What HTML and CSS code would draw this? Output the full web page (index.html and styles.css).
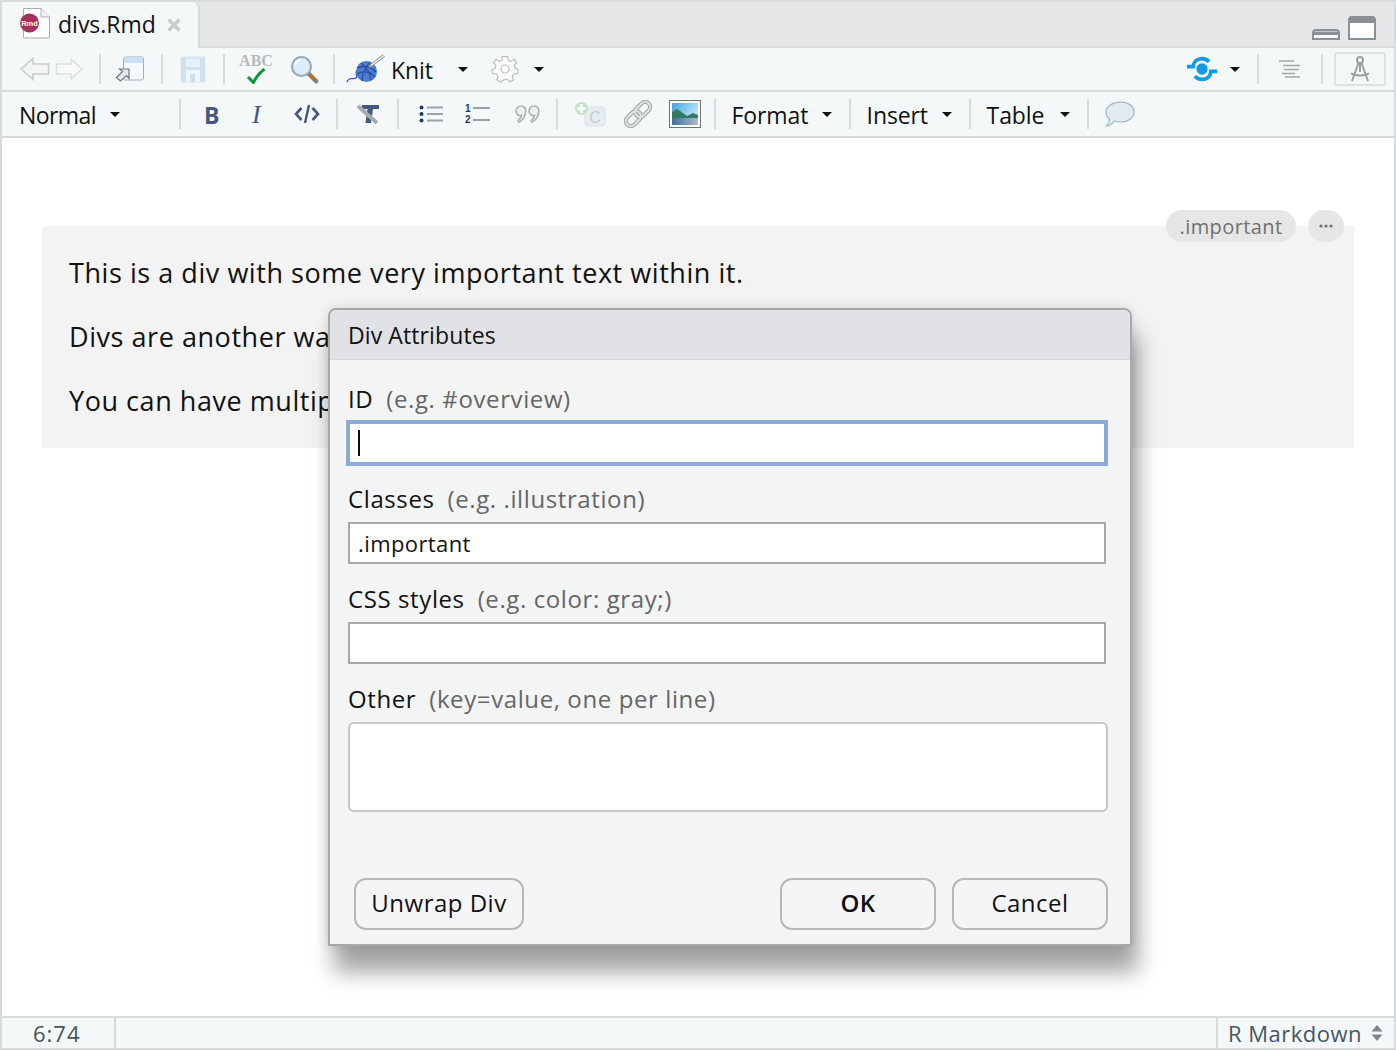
FILE: index.html
```html
<!DOCTYPE html>
<html lang="en">
<head>
    <meta charset="UTF-8">
    <meta name="viewport" content="width=device-width, initial-scale=1.0">
    <title>divs.Rmd</title>
    <link rel="stylesheet" href="styles.css">
</head>
<body>
    <div class="window">
        <div class="tabbar">
            <div class="tab">
                <svg class="tab-icon" width="32" height="34" viewBox="0 0 32 34">
                    <path d="M5.500 2.500H23L31.500 11V31.500a.5.5 0 0 1-.5.5H6a.5.5 0 0 1-.5-.5z" fill="#fff" stroke="#a9adb0"/>
                    <path d="M23 2.500V11H31.500" fill="#f1f2f3" stroke="#a9adb0"/>
                    <circle cx="11.500" cy="17" r="9.500" fill="#a5305a"/>
                    <text x="11.500" y="19.500" class="rmd-text">Rmd</text>
                </svg>
                <span class="tab-name">divs.Rmd</span>
                <svg class="tab-close" width="14" height="14" viewBox="0 0 14 14"><path d="M1.500 1.500L12.500 12.500M12.500 1.500L1.500 12.500" stroke="#c9cccd" stroke-width="3.600"/></svg>
            </div>
            <div class="pane-btns">
                <svg width="28" height="12" viewBox="0 0 28 12"><path d="M1 11V5a3 3 0 0 1 3-3H24a3 3 0 0 1 3 3V11z" fill="#fff" stroke="#8a9196" stroke-width="2"/><path d="M1 3.500H27V7H1z" fill="#8a9196"/></svg>
                <svg width="28" height="24" viewBox="0 0 28 24"><path d="M1 23V4a3 3 0 0 1 3-3H24a3 3 0 0 1 3 3V23z" fill="#fff" stroke="#8a9196" stroke-width="2"/><path d="M1 2H27V7H1z" fill="#8a9196"/></svg>
            </div>
        </div>

        <div class="toolbar">
            <svg class="i-back" width="30" height="24" viewBox="0 0 30 24"><path d="M1 12L13 1.500V7H28.500V17H13V22.500z" fill="#f3f5f6" stroke="#c6cacc" stroke-width="1.500"/></svg>
            <svg class="i-forward" width="28" height="24" viewBox="0 0 28 24"><path d="M27 12L16 2V7H1.500V17H16V22z" fill="#f7f9fa" stroke="#dcdfe0" stroke-width="1.500"/></svg>
            <span class="sep sep-a"></span>
            <svg class="i-popout" width="30" height="26" viewBox="0 0 30 26"><rect x="8.500" y="1" width="20" height="23" rx="2" fill="#f7fafc" stroke="#9fb1c0"/><path d="M9 2.500a1.500 1.500 0 0 1 1.500-1.500H26.500a1.500 1.500 0 0 1 1.500 1.500V7H9z" fill="#c9e0f5"/><path d="M1.500 21.500L7.500 15.500L4.500 13H14V22.500L11.500 19.500L5.500 25z" fill="#e3e8ec" stroke="#6d7a84" stroke-width="1.200"/></svg>
            <span class="sep sep-b"></span>
            <svg class="i-save" width="26" height="27" viewBox="0 0 26 27"><path d="M2 1H24a1 1 0 0 1 1 1V25a1 1 0 0 1-1 1H2a1 1 0 0 1-1-1V2a1 1 0 0 1 1-1z" fill="#cfe1f0" stroke="#d9e5ef"/><rect x="6" y="3" width="14" height="8" fill="#e6f0f8"/><rect x="6" y="14" width="14" height="12" fill="#f1f6fa"/><rect x="10" y="18" width="5" height="8" fill="#cfe1f0"/></svg>
            <span class="sep sep-c"></span>
            <span class="i-spell">
                <span class="abc">ABC</span>
                <svg class="check" width="20" height="16" viewBox="0 0 20 16"><path d="M2 9L7.500 14.500C10 9 13 5 18.500 1" fill="none" stroke="#12933a" stroke-width="3"/></svg>
            </span>
            <svg class="i-find" width="29" height="29" viewBox="0 0 29 29"><path d="M18 18L26 26" stroke="#a8743c" stroke-width="4.500" stroke-linecap="round"/><path d="M26 26L27.500 27.500" stroke="#4a9ccf" stroke-width="3.500"/><circle cx="11.500" cy="11.500" r="9.500" fill="#dcecf8" stroke="#93a7b4" stroke-width="2"/><path d="M5 10a7 7 0 0 1 6-5" fill="none" stroke="#fff" stroke-width="2"/></svg>
            <span class="sep sep-d"></span>
            <svg class="i-knit" width="40" height="30" viewBox="0 0 40 30"><path d="M1 28C3 22 7 26 10 24S7 18 12 16" fill="none" stroke="#2f5bb0" stroke-width="1.300"/><circle cx="20.500" cy="17.500" r="10.500" fill="#4a7ccf"/><path d="M11 14C18 11 25 13 30 18M11 20C18 16 25 18 29 23M15 9C20 13 25 20 25 26M24 8C20 13 16 20 16 27" fill="none" stroke="#234c9e" stroke-width="1.200"/><path d="M23 13L38 1.500" stroke="#8d8f92" stroke-width="3"/><path d="M25 11.500L38 1.500" stroke="#fff" stroke-width="1.200"/></svg>
            <span class="tb-label knit-label">Knit</span>
            <span class="caret knit-caret"></span>
            <svg class="i-gear" width="28" height="28" viewBox="0 0 28 28"><path d="M11.500 1.500H16.500L17.300 5.200L20 6.400L23.300 4.300L25.700 7.600L23.200 10.300L24 13L27 14.500L26.500 18.500L22.800 19L21.300 21.500L22.500 25L19 26.800L16.500 24.200H13.500L9.500 26.800L6 24.800L7 21.500L5.500 19L1.500 18.500L1 14.500L4.300 13L5 10.300L2.500 7.600L5 4.300L8.300 6.400L11 5.200z" fill="#fafbfb" stroke="#b6babd" stroke-width="1.100"/><circle cx="14" cy="14" r="4" fill="#fff" stroke="#b6babd" stroke-width="1.100"/></svg>
            <span class="caret gear-caret"></span>
            <div class="toolbar-right">
                <svg class="i-publish" width="32" height="26" viewBox="0 0 34 26"><path d="M1 10.500H7.500C8 5 12 2 17 2C20.500 2 23 3.500 24.500 5.500M33 15.500H26.500C26 21 22 24 17 24C13.500 24 11 22.500 9.500 20.500" fill="none" stroke="#119ae8" stroke-width="4"/><circle cx="17" cy="13" r="6" fill="#119ae8"/></svg>
                <span class="caret publish-caret"></span>
                <span class="sep sep-e"></span>
                <svg class="i-outline" width="22" height="18" viewBox="0 0 22 18"><path d="M1 1H16M5 5.500H22M6 9.500H21M4 13.500H17M7 17H22" stroke="#a3a7aa" stroke-width="1.700"/></svg>
                <span class="sep sep-f"></span>
                <span class="visual-btn">
                    <svg width="24" height="28" viewBox="0 0 24 28"><circle cx="12" cy="5" r="3" fill="none" stroke="#9ba0a3" stroke-width="2"/><path d="M10.500 8L4 26M13.500 8L20 26M12 8V17M3 18.500C8 21 16 21 21 18.500" fill="none" stroke="#9ba0a3" stroke-width="2"/></svg>
                </span>
            </div>
        </div>

        <div class="toolbar formatbar">
            <span class="tb-label normal-label">Normal</span>
            <span class="caret normal-caret"></span>
            <span class="sep sep-g"></span>
            <b class="i-bold">B</b>
            <i class="i-italic">I</i>
            <svg class="i-code" width="26" height="20" viewBox="0 0 26 20"><path d="M7.500 4L2 10L7.500 16M18.500 4L24 10L18.500 16" fill="none" stroke="#45567f" stroke-width="2.600"/><path d="M15 1L11 19" stroke="#45567f" stroke-width="2.400"/></svg>
            <span class="sep sep-h"></span>
            <svg class="i-clear" width="22" height="20" viewBox="0 0 22 20"><path d="M5 1H22V5H16L14 19H8.500L10.500 5H5z" fill="#45567f"/><path d="M1 2L20 19" stroke="#a6abae" stroke-width="3.800"/></svg>
            <span class="sep sep-i"></span>
            <svg class="i-bullets" width="24" height="18" viewBox="0 0 24 18"><circle cx="2.500" cy="2.500" r="2" fill="#1f3769"/><circle cx="2.500" cy="9" r="2" fill="#1f3769"/><circle cx="2.500" cy="15.500" r="2" fill="#1f3769"/><path d="M8 2.500H24M8 9H24M8 15.500H24" stroke="#9aa2a8" stroke-width="1.800"/></svg>
            <span class="i-numbered">
                <span class="digits"><span>1</span><span>2</span></span>
                <svg width="17" height="14" viewBox="0 0 17 14"><path d="M0 1H17M0 13H17" stroke="#9aa2a8" stroke-width="1.800"/></svg>
            </span>
            <svg class="i-quote" width="25" height="18" viewBox="0 0 25 18"><path d="M6 1a4.500 4.500 0 0 1 4.800 5C10.500 11 8 15 4 17L3 15.500C5 14 6 12.500 6.500 10.500C3.500 11 1 9 1 6A5 5 0 0 1 6 1zM19 1a4.500 4.500 0 0 1 4.800 5C23.500 11 21 15 17 17L16 15.500C18 14 19 12.500 19.500 10.500C16.500 11 14 9 14 6A5 5 0 0 1 19 1z" fill="#eef0f1" stroke="#a9aeb1" stroke-width="1.500"/></svg>
            <span class="sep sep-j"></span>
            <svg class="i-cite" width="32" height="26" viewBox="0 0 32 26"><rect x="11" y="6" width="20" height="19" rx="3" fill="#e6ecf2" stroke="#d8e0e6"/><text x="21" y="21.500" class="cite-text">C</text><circle cx="7.500" cy="7.500" r="6.500" fill="#bfe6bd"/><path d="M7.500 3V12M3 7.500H12" stroke="#fff" stroke-width="3"/></svg>
            <svg class="i-link" width="28" height="28" viewBox="0 0 28 28"><g fill="none" transform="rotate(-45 14 14)"><rect x="-1" y="9" width="17" height="10" rx="5" stroke="#a8adb0" stroke-width="4.200"/><rect x="12" y="9" width="17" height="10" rx="5" stroke="#a8adb0" stroke-width="4.200"/><rect x="-1" y="9" width="17" height="10" rx="5" stroke="#e6e8e9" stroke-width="1.800"/><rect x="12" y="9" width="17" height="10" rx="5" stroke="#e6e8e9" stroke-width="1.800"/></g></svg>
            <svg class="i-image" width="32" height="28" viewBox="0 0 32 28"><defs><linearGradient id="sky" x1="0" y1="0" x2="1" y2="0.600"><stop offset="0" stop-color="#3fa3e0"/><stop offset="1" stop-color="#cfeafa"/></linearGradient><linearGradient id="lake" x1="0" y1="0" x2="1" y2="0"><stop offset="0" stop-color="#3f6f9c"/><stop offset="1" stop-color="#a9bccb"/></linearGradient></defs><rect x="0.500" y="0.500" width="31" height="27" fill="#fff" stroke="#6f7275"/><rect x="3" y="3" width="26" height="22" fill="url(#sky)"/><rect x="3" y="18" width="26" height="7" fill="url(#lake)"/><path d="M3 12L8 9L14 13L18 16L24 13L29 15V18H3z" fill="#2f7d5e"/></svg>
            <span class="sep sep-k"></span>
            <span class="tb-label format-label">Format</span>
            <span class="caret menu-caret"></span>
            <span class="sep sep-l"></span>
            <span class="tb-label insert-label">Insert</span>
            <span class="caret menu-caret"></span>
            <span class="sep sep-l"></span>
            <span class="tb-label table-label">Table</span>
            <span class="caret menu-caret"></span>
            <span class="sep sep-l"></span>
            <svg class="i-comment" width="30" height="26" viewBox="0 0 30 26"><path d="M16 1C23 1 29 5 29 11S23 21 16 21C13 21 11 20.500 9.500 20C8 22 5 24.500 1.500 25C3.500 23 4.500 20.500 4.500 18C2 16 1 14 1 11C1 5 8 1 16 1z" fill="#dfeaf2" stroke="#a2b3c2" stroke-width="1.200"/></svg>
        </div>

        <div class="editor">
            <div class="div-block">
                <p>This is a div with some very important text within it.</p>
                <p>Divs are another way</p>
                <p>You can have multip</p>
                <div class="div-chips">
                    <span class="chip">.important</span>
                    <span class="chip-more"><svg width="14" height="4" viewBox="0 0 14 4"><circle cx="2" cy="2" r="1.600"/><circle cx="7" cy="2" r="1.600"/><circle cx="12" cy="2" r="1.600"/></svg></span>
                </div>
            </div>
        </div>

        <div class="statusbar">
            <span class="pos">6:74</span>
            <span class="status-mid"></span>
            <span class="mode">R Markdown
                <svg width="12" height="18" viewBox="0 0 12 18"><path d="M6 1L11.500 7.500H.5zM6 17L.5 10.500H11.500z" fill="#7d868c"/></svg>
            </span>
        </div>

        <form class="dialog">
            <div class="dialog-title">Div Attributes</div>
            <div class="dialog-body">
                <label class="field-label">ID<span class="hint">(e.g. #overview)</span></label>
                <div class="input focused"><span class="cursor"></span></div>
                <label class="field-label">Classes<span class="hint">(e.g. .illustration)</span></label>
                <div class="input">.important</div>
                <label class="field-label">CSS styles<span class="hint">(e.g. color: gray;)</span></label>
                <div class="input"></div>
                <label class="field-label">Other<span class="hint">(key=value, one per line)</span></label>
                <div class="textarea"></div>
                <div class="dialog-buttons">
                    <button type="button" class="btn btn-unwrap">Unwrap Div</button>
                    <button type="button" class="btn btn-ok">OK</button>
                    <button type="button" class="btn btn-cancel">Cancel</button>
                </div>
            </div>
        </form>
    </div>
</body>
</html>
```

FILE: styles.css
```css
html, body {
    margin: 0;
    height: 100%;
    background-color: #fff;
}
body {
    font-family: "Open Sans", "Noto Sans", sans-serif;
    color: #111;
    overflow: hidden;
}
svg {
    display: block;
    flex: none;
}
.window {
    position: relative;
    box-sizing: border-box;
    width: 1396px;
    height: 1050px;
    border: 2px solid #d6dadc;
    display: flex;
    flex-direction: column;
}

/* tab strip */
.tabbar {
    height: 44px;
    background-color: #e6e7e9;
    display: flex;
    justify-content: space-between;
    flex: none;
    border-bottom: 2px solid #d6dadc;
}
.tab {
    width: 198px;
    height: 46px;
    box-sizing: border-box;
    background-color: #f4f8f9;
    border-right: 2px solid #d6dadc;
    border-top-right-radius: 6px;
    display: flex;
    align-items: center;
    padding-left: 16px;
    padding-bottom: 4px;
}
.rmd-text {
    font-family: "Liberation Sans", sans-serif;
    font-size: 7.500px;
    font-weight: bold;
    fill: #fff;
    text-anchor: middle;
}
.tab-name {
    font-size: 23px;
    width: 97px;
    margin-left: 8px;
    padding-top: 2px;
}
.tab-close {
    margin-left: 12px;
    margin-top: 4px;
}
.pane-btns {
    display: flex;
    align-items: flex-end;
    gap: 8px;
    padding: 0 18px 6px 0;
}

/* toolbars */
.toolbar {
    height: 42px;
    flex: none;
    background-color: #f4f8f9;
    border-bottom: 2px solid #d6dadc;
    display: flex;
    align-items: center;
}
.formatbar {
    height: 44px;
}
.toolbar-right {
    margin-left: auto;
    display: flex;
    align-items: center;
}
.tb-label {
    font-size: 23px;
    letter-spacing: -0.100px;
    flex: none;
    padding-top: 2px;
}
.sep {
    width: 2px;
    height: 30px;
    background-color: #d9dcde;
    flex: none;
}
.caret {
    width: 0;
    height: 0;
    flex: none;
    border-left: 5px solid transparent;
    border-right: 5px solid transparent;
    border-top: 5px solid #111;
}

.i-back { margin-left: 18px; }
.i-forward { margin-left: 5px; }
.sep-a { margin-left: 16px; }
.i-popout { margin-left: 14px; }
.sep-b { margin-left: 16px; }
.i-save { margin-left: 17px; }
.sep-c { margin-left: 17px; }
.i-spell {
    margin-left: 13px;
    width: 36px;
    display: flex;
    flex-direction: column;
    align-items: center;
    height: 32px;
}
.abc {
    font-family: "Liberation Serif", serif;
    font-weight: bold;
    font-size: 16px;
    line-height: 15px;
    color: #b5b9bc;
}
.i-find { margin-left: 16px; }
.sep-d { margin-left: 14px; }
.i-knit { margin-left: 11px; }
.knit-label { margin-left: 5px; width: 42px; }
.knit-caret { margin-left: 25px; }
.i-gear { margin-left: 23px; }
.gear-caret { margin-left: 15px; }

.publish-caret { margin-left: 12px; }
.sep-e { margin-left: 17px; }
.i-outline { margin-left: 19px; }
.sep-f { margin-left: 21px; }
.visual-btn {
    width: 52px;
    height: 34px;
    box-sizing: border-box;
    margin-left: 11px;
    margin-right: 8px;
    border: 2px solid #dfe2e3;
    border-radius: 3px;
    display: flex;
    align-items: center;
    justify-content: center;
}

.normal-label { margin-left: 17px; width: 77px; letter-spacing: -0.600px; }
.normal-caret { margin-left: 14px; }
.sep-g { margin-left: 59px; }
.i-bold {
    margin-left: 23px;
    width: 14px;
    font-size: 23px;
    color: #45567f;
    padding-top: 2px;
}
.i-italic {
    margin-left: 34px;
    width: 16px;
    font-family: "Liberation Serif", serif;
    font-size: 26px;
    color: #45567f;
    padding-top: 2px;
}
.i-code { margin-left: 26px; }
.sep-h { margin-left: 16px; }
.i-clear { margin-left: 19px; }
.sep-i { margin-left: 18px; }
.i-bullets { margin-left: 20px; }
.i-numbered {
    margin-left: 22px;
    display: flex;
    align-items: center;
    gap: 2px;
}
.digits {
    display: flex;
    flex-direction: column;
    font-family: "Liberation Sans", sans-serif;
    font-weight: bold;
    font-size: 10px;
    line-height: 11.500px;
    color: #1f3769;
}
.i-quote { margin-left: 25px; }
.sep-j { margin-left: 16px; }
.i-cite { margin-left: 16px; }
.cite-text {
    font-family: "Liberation Sans", sans-serif;
    font-size: 16px;
    fill: #c3ccd4;
    text-anchor: middle;
}
.i-link { margin-left: 18px; }
.i-image { margin-left: 17px; }
.sep-k { margin-left: 13px; }
.format-label { margin-left: 16px; width: 75px; }
.insert-label { margin-left: 16px; width: 60px; }
.table-label { margin-left: 16px; width: 58px; }
.menu-caret { margin-left: 15px; }
.sep-l { margin-left: 17px; }
.i-comment { margin-left: 16px; }

/* editor area */
.editor {
    flex: 1;
    background-color: #fff;
    padding: 88px 40px 0;
}
.div-block {
    position: relative;
    height: 222px;
    box-sizing: border-box;
    background-color: #f3f3f3;
    padding: 27px;
    font-size: 27px;
    letter-spacing: 0.550px;
}
.div-block p {
    margin: 0 0 24px;
    line-height: 40px;
}
.div-chips {
    position: absolute;
    top: -16px;
    right: 10px;
    display: flex;
    gap: 12px;
}
.chip {
    height: 32px;
    width: 130px;
    border-radius: 16px;
    background-color: #e6e6e6;
    color: #707070;
    font-size: 20px;
    letter-spacing: 0.400px;
    line-height: 34px;
    text-align: center;
}
.chip-more {
    width: 36px;
    height: 32px;
    border-radius: 16px;
    background-color: #e6e6e6;
    display: flex;
    align-items: center;
    justify-content: center;
    fill: #707070;
}

/* status bar */
.statusbar {
    height: 30px;
    flex: none;
    background-color: #f4f8f9;
    border-top: 2px solid #d6dadc;
    display: flex;
    align-items: center;
    font-size: 22px;
    letter-spacing: 0.500px;
    color: #46555f;
}
.pos {
    width: 114px;
    box-sizing: border-box;
    padding-left: 31px;
    height: 100%;
    border-right: 2px solid #d6dadc;
    line-height: 30px;
    letter-spacing: 1px;
}
.status-mid {
    flex: 1;
    height: 100%;
}
.mode {
    width: 178px;
    height: 100%;
    box-sizing: border-box;
    border-left: 2px solid #d6dadc;
    padding-left: 10px;
    display: flex;
    align-items: center;
    justify-content: space-between;
    padding-right: 11px;
}

/* dialog */
.dialog {
    position: absolute;
    left: 326px;
    top: 306px;
    width: 804px;
    height: 638px;
    box-sizing: border-box;
    margin: 0;
    background-color: #f3f4f4;
    border: 2px solid #a8a8a8;
    border-top-left-radius: 8px;
    border-top-right-radius: 8px;
    box-shadow: 6px 26px 22px rgba(0, 0, 0, 0.36), 0 0 12px rgba(0, 0, 0, 0.12);
    display: flex;
    flex-direction: column;
}
.dialog-title {
    height: 50px;
    flex: none;
    box-sizing: border-box;
    padding-left: 18px;
    background-color: #e1e2e6;
    border-bottom: 1px solid #d6d7da;
    font-size: 23px;
    letter-spacing: 0.100px;
    line-height: 50px;
    border-top-left-radius: 6px;
    border-top-right-radius: 6px;
}
.dialog-body {
    flex: 1;
    display: flex;
    flex-direction: column;
    padding: 4px 22px 14px 18px;
}
.field-label {
    height: 58px;
    box-sizing: border-box;
    padding-top: 17px;
    font-size: 24px;
    letter-spacing: 0.600px;
    line-height: 36px;
    flex: none;
}
.hint {
    margin-left: 13px;
    color: #666;
}
.input {
    width: 758px;
    height: 42px;
    flex: none;
    box-sizing: border-box;
    background-color: #fff;
    border: 2px solid #a8a8a8;
    padding-left: 8px;
    font-size: 22px;
    letter-spacing: 0.400px;
    line-height: 39px;
}
.input.focused {
    border-color: #8aaad8;
    outline: 2px solid #8aaad8;
    padding-top: 6px;
}
.cursor {
    display: block;
    width: 2px;
    height: 26px;
    background-color: #111;
}
.textarea {
    width: 760px;
    height: 90px;
    flex: none;
    box-sizing: border-box;
    background-color: #fff;
    border: 2px solid #c6c8c9;
    border-radius: 6px;
}
.dialog-buttons {
    margin-top: auto;
    display: flex;
    padding-left: 6px;
}
.btn {
    height: 52px;
    box-sizing: border-box;
    background-color: #f5f5f7;
    border: 2px solid #b8b8b8;
    border-radius: 12px;
    font-family: inherit;
    font-size: 24px;
    letter-spacing: 0.500px;
    color: #111;
    padding: 0 0 3px;
}
.btn-unwrap { width: 170px; }
.btn-ok { width: 156px; margin-left: auto; font-weight: 600; }
.btn-cancel { width: 156px; margin-left: 16px; }
```
